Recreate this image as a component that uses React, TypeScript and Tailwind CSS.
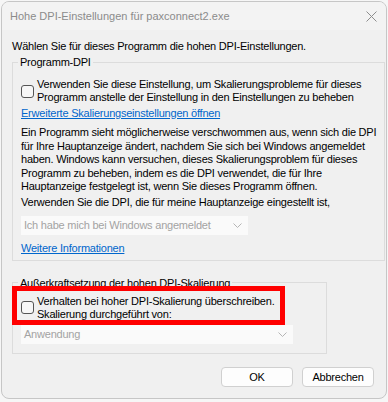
import React from "react";

const FONT = { fontFamily: '"Liberation Sans", Arial, sans-serif' };

function Checkbox() {
  return <span className="w-[13px] h-[13px] shrink-0 rounded-[3px] border border-[#555] bg-[#f7f7f7]" />;
}

function Dropdown({ label, width }: { label: string; width: string }) {
  return (
    <div className={`${width} h-[19px] flex items-center justify-between bg-[#fafafa] pl-[3px] pr-[6px] text-[#a3a3a3]`}>
      <span>{label}</span>
      <svg width="9" height="5" viewBox="0 0 9 5" fill="none">
        <path d="M0.5 0.5L4.5 4.5L8.5 0.5" stroke="#b5b5b5" strokeWidth="1" />
      </svg>
    </div>
  );
}

export default function App() {
  return (
    <div className="min-h-screen bg-[#f6f6f6] pt-px pl-px text-[11px] tracking-[-0.22px] text-black whitespace-nowrap" style={FONT}>
      <div className="relative w-[386px] h-[398px] rounded-[8px] border border-[#c6c6c6] bg-[#f0f0f0] overflow-hidden">
        {/* Title bar */}
        <div className="h-[28px] flex items-center justify-between bg-[#f3f3f3] pl-[8px] pr-[8px]">
          <span className="text-[#8b8b8b] leading-[14px] tracking-normal">Hohe DPI-Einstellungen für paxconnect2.exe</span>
          <svg width="11" height="11" viewBox="0 0 11 11" className="mr-[1px]">
            <path d="M0.5 0.5L10.5 10.5M10.5 0.5L0.5 10.5" stroke="#8d8d8d" strokeWidth="1" />
          </svg>
        </div>

        <div className="px-[10px]">
          <p className="mt-[9px] leading-[14px]">Wählen Sie für dieses Programm die hohen DPI-Einstellungen.</p>

          {/* Programm-DPI */}
          <fieldset className="mt-[2px] w-[371px] border border-[#dcdcdc] px-[8px] pb-[5px]">
            <legend className="ml-[-3px] px-[2px] leading-[14px]">Programm-DPI</legend>
            <label className="mt-[9px] flex items-center gap-[3px] leading-[13px]">
              <Checkbox />
              <span>
                Verwenden Sie diese Einstellung, um Skalierungsprobleme für dieses
                <br />
                Programm anstelle der Einstellung in den Einstellungen zu beheben
              </span>
            </label>
            <a className="mt-[2px] block leading-[14px] text-[#0066cc] underline">Erweiterte Skalierungseinstellungen öffnen</a>
            <p className="mt-[6px] leading-[13.5px]">
              Ein Programm sieht möglicherweise verschwommen aus, wenn sich die DPI
              <br />
              für Ihre Hauptanzeige ändert, nachdem Sie sich bei Windows angemeldet
              <br />
              haben. Windows kann versuchen, dieses Skalierungsproblem für dieses
              <br />
              Programm zu beheben, indem es die DPI verwendet, die für Ihre
              <br />
              Hauptanzeige festgelegt ist, wenn Sie dieses Programm öffnen.
            </p>
            <p className="mt-[1px] leading-[14px]">Verwenden Sie die DPI, die für meine Hauptanzeige eingestellt ist,</p>
            <div className="mt-[7px]">
              <Dropdown label="Ich habe mich bei Windows angemeldet" width="w-[227px]" />
            </div>
            <a className="mt-[6px] block leading-[14px] text-[#0066cc] underline">Weitere Informationen</a>
          </fieldset>

          {/* Außerkraftsetzung */}
          <fieldset className="mt-[15px] w-[315px] border border-[#dcdcdc] px-[8px] pb-[9px]">
            <legend className="ml-[-3px] px-[2px] leading-[14px]">Außerkraftsetzung der hohen DPI-Skalierung</legend>
            <label className="mt-[5px] flex items-center gap-[3px] leading-[13px]">
              <Checkbox />
              <span>
                Verhalten bei hoher DPI-Skalierung überschreiben.
                <br />
                Skalierung durchgeführt von:
              </span>
            </label>
            <div className="mt-[4px]">
              <Dropdown label="Anwendung" width="w-[272px]" />
            </div>
          </fieldset>
        </div>

        {/* Buttons */}
        <div className="mt-[13px] flex justify-end gap-[9px] pr-[12px]">
          <button className="w-[72px] h-[20px] rounded-[4px] border border-[#d0d0d0] bg-[#fdfdfd] leading-[14px]">OK</button>
          <button className="w-[72px] h-[20px] rounded-[4px] border border-[#d0d0d0] bg-[#fdfdfd] leading-[14px]">Abbrechen</button>
        </div>

        {/* red highlight annotation */}
        <div className="absolute left-[10px] top-[284px] w-[273px] h-[39px] border-[5px] border-[#ff0000]" />
      </div>
    </div>
  );
}
